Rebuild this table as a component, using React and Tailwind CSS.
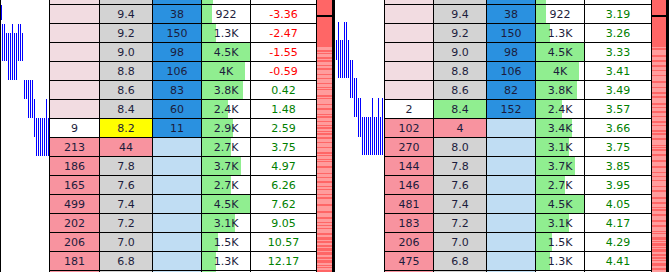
import React from 'react';

const BG = {
  lp: 'bg-[#f2dce1]',
  w: 'bg-white',
  pk: 'bg-[#f8939f]',
  g: 'bg-[#d3d3d3]',
  y: 'bg-[#ffff00]',
  lg: 'bg-[#90ee90]',
  b: 'bg-[#2a91e0]',
  lb: 'bg-[#c0ddf3]',
};

function barW(v) {
  if (!v) return 0;
  const n = v.endsWith('K') ? parseFloat(v) : parseFloat(v) / 1000;
  return Math.round((n / 4.5) * 48);
}

const P1 = [
  ['', 'lp', '', 'g', '', 'b', '', '', 11],
  ['', 'lp', '9.4', 'g', '38', 'b', '922', '-3.36'],
  ['', 'lp', '9.2', 'g', '150', 'b', '1.3K', '-2.47'],
  ['', 'lp', '9.0', 'g', '98', 'b', '4.5K', '-1.55'],
  ['', 'lp', '8.8', 'g', '106', 'b', '4K', '-0.59'],
  ['', 'lp', '8.6', 'g', '83', 'b', '3.8K', '0.42'],
  ['', 'lp', '8.4', 'g', '60', 'b', '2.4K', '1.48'],
  ['9', 'w', '8.2', 'y', '11', 'b', '2.9K', '2.59'],
  ['213', 'pk', '44', 'pk', '', 'lb', '2.7K', '3.75'],
  ['186', 'pk', '7.8', 'g', '', 'lb', '3.7K', '4.97'],
  ['165', 'pk', '7.6', 'g', '', 'lb', '2.7K', '6.26'],
  ['499', 'pk', '7.4', 'g', '', 'lb', '4.5K', '7.62'],
  ['202', 'pk', '7.2', 'g', '', 'lb', '3.1K', '9.05'],
  ['206', 'pk', '7.0', 'g', '', 'lb', '1.5K', '10.57'],
  ['181', 'pk', '6.8', 'g', '', 'lb', '1.3K', '12.17'],
  ['', 'pk', '', 'g', '', 'lb', '', '', 14],
];

const P2 = [
  ['', 'lp', '', 'g', '', 'b', '', '', 10],
  ['', 'lp', '9.4', 'g', '38', 'b', '922', '3.19'],
  ['', 'lp', '9.2', 'g', '150', 'b', '1.3K', '3.26'],
  ['', 'lp', '9.0', 'g', '98', 'b', '4.5K', '3.33'],
  ['', 'lp', '8.8', 'g', '106', 'b', '4K', '3.41'],
  ['', 'lp', '8.6', 'g', '82', 'b', '3.8K', '3.49'],
  ['2', 'w', '8.4', 'lg', '152', 'b', '2.4K', '3.57'],
  ['102', 'pk', '4', 'pk', '', 'lb', '3.4K', '3.66'],
  ['270', 'pk', '8.0', 'g', '', 'lb', '3.1K', '3.75'],
  ['144', 'pk', '7.8', 'g', '', 'lb', '3.7K', '3.85'],
  ['146', 'pk', '7.6', 'g', '', 'lb', '2.7K', '3.95'],
  ['481', 'pk', '7.4', 'g', '', 'lb', '4.5K', '4.05'],
  ['183', 'pk', '7.2', 'g', '', 'lb', '3.1K', '4.17'],
  ['206', 'pk', '7.0', 'g', '', 'lb', '1.5K', '4.29'],
  ['475', 'pk', '6.8', 'g', '', 'lb', '1.3K', '4.41'],
  ['', 'pk', '', 'g', '', 'lb', '', '', 0],
];

// tick segments in page coords: [xFrom, xTo, y1, y2]
const T1 = [
  [1, 1, 5, 20],
  [2, 2, 24, 33], [4, 4, 24, 33], [12, 12, 24, 33], [18, 18, 24, 33], [20, 20, 24, 33],
  [2, 22, 33, 61],
  [8, 16, 61, 80],
  [24, 32, 80, 99],
  [28, 34, 99, 118],
  [46, 46, 99, 118],
  [34, 48, 118, 137],
  [36, 48, 137, 156],
];

const T2 = [
  [338, 338, 22, 40], [344, 344, 22, 40], [346, 346, 22, 40],
  [336, 348, 40, 60],
  [338, 352, 60, 78],
  [350, 356, 78, 98],
  [354, 360, 98, 117],
  [372, 372, 98, 117], [378, 378, 98, 117], [382, 382, 98, 117],
  [358, 382, 117, 137],
  [362, 382, 137, 155],
];

function Ticks({ segs, left, width }) {
  const lines = [];
  segs.forEach(([a, b, y1, y2], i) => {
    for (let x = a; x <= b; x += 2) {
      lines.push(
        <rect key={i + '-' + x} x={x - left} y={y1 + 14} width={1} height={y2 - y1} fill="#0000ff" />
      );
    }
  });
  return (
    <svg width={width} height={304} viewBox={`0 0 ${width} 304`} shapeRendering="crispEdges" className="block shrink-0 bg-white">
      {lines}
    </svg>
  );
}

function stripes(seed) {
  let s = seed;
  const rnd = () => {
    s = (s * 9301 + 49297) % 233280;
    return s / 233280;
  };
  const out = [];
  let y = 47;
  let light = true;
  while (y < 290) {
    const dense = y > 235;
    const h = light ? 1 + Math.floor(rnd() * (dense ? 2 : 5)) : 1 + Math.floor(rnd() * (dense ? 3 : 2));
    out.push([y, h, light]);
    y += h;
    light = !light;
  }
  return out;
}

function Strip({ width, seed }) {
  const st = stripes(seed);
  return (
    <svg width={width} height={304} viewBox={`0 0 ${width} 304`} shapeRendering="crispEdges" className="block shrink-0">
      <rect x={0} y={0} width={width} height={304} fill="#ff6666" />
      <rect x={0} y={15 + 14} width={width} height={2} fill="#000" />
      {st.filter((r) => r[2]).map(([y, h], i) => (
        <rect key={i} x={0} y={y + 14} width={width} height={h} fill="#ff9c9c" />
      ))}
    </svg>
  );
}

function Cell({ text, kind, cls = '' }) {
  return (
    <div className={`${BG[kind]} text-center pt-[2px] leading-[16px] text-[#1c1c3c] ${cls}`}>{text}</div>
  );
}

function Grid({ rows, cols }) {
  return (
    <div className={`grid ${cols} auto-rows-[18px] gap-px bg-black px-px shrink-0`}>
      {rows.map((r, i) => {
        const w = r[8] !== undefined ? r[8] : barW(r[6]);
        const neg = r[7].startsWith('-');
        return (
          <React.Fragment key={i}>
            <Cell text={r[0]} kind={r[1]} />
            <Cell text={r[2]} kind={r[3]} />
            <Cell text={r[4]} kind={r[5]} />
            <div className="relative bg-white text-center pt-[2px] leading-[16px] text-[#1c1c3c]">
              <div className="absolute left-0 top-0 bottom-0 bg-[#90ee90]" style={{ width: w }} />
              <span className="relative">{r[6]}</span>
            </div>
            <div className={`bg-white text-center pt-[2px] leading-[16px] ${neg ? 'text-[#ff0000]' : 'text-[#008000]'}`}>{r[7]}</div>
          </React.Fragment>
        );
      })}
    </div>
  );
}

export default function App() {
  return (
    <div className="w-[669px] h-[272px] overflow-hidden bg-white text-[11px] font-['DejaVu_Sans',sans-serif]">
      <div className="flex -mt-[14px] h-[304px]">
        <div className="w-px bg-black shrink-0" />
        <Ticks segs={T1} left={1} width={48} />
        <Grid rows={P1} cols="grid-cols-[49px_52px_48px_48px_65px]" />
        <Strip width={15} seed={7} />
        <div className="w-[3px] bg-black shrink-0" />
        <Ticks segs={T2} left={335} width={49} />
        <Grid rows={P2} cols="grid-cols-[48px_52px_48px_48px_66px]" />
        <Strip width={14} seed={23} />
        <div className="w-[3px] bg-black shrink-0" />
      </div>
    </div>
  );
}
